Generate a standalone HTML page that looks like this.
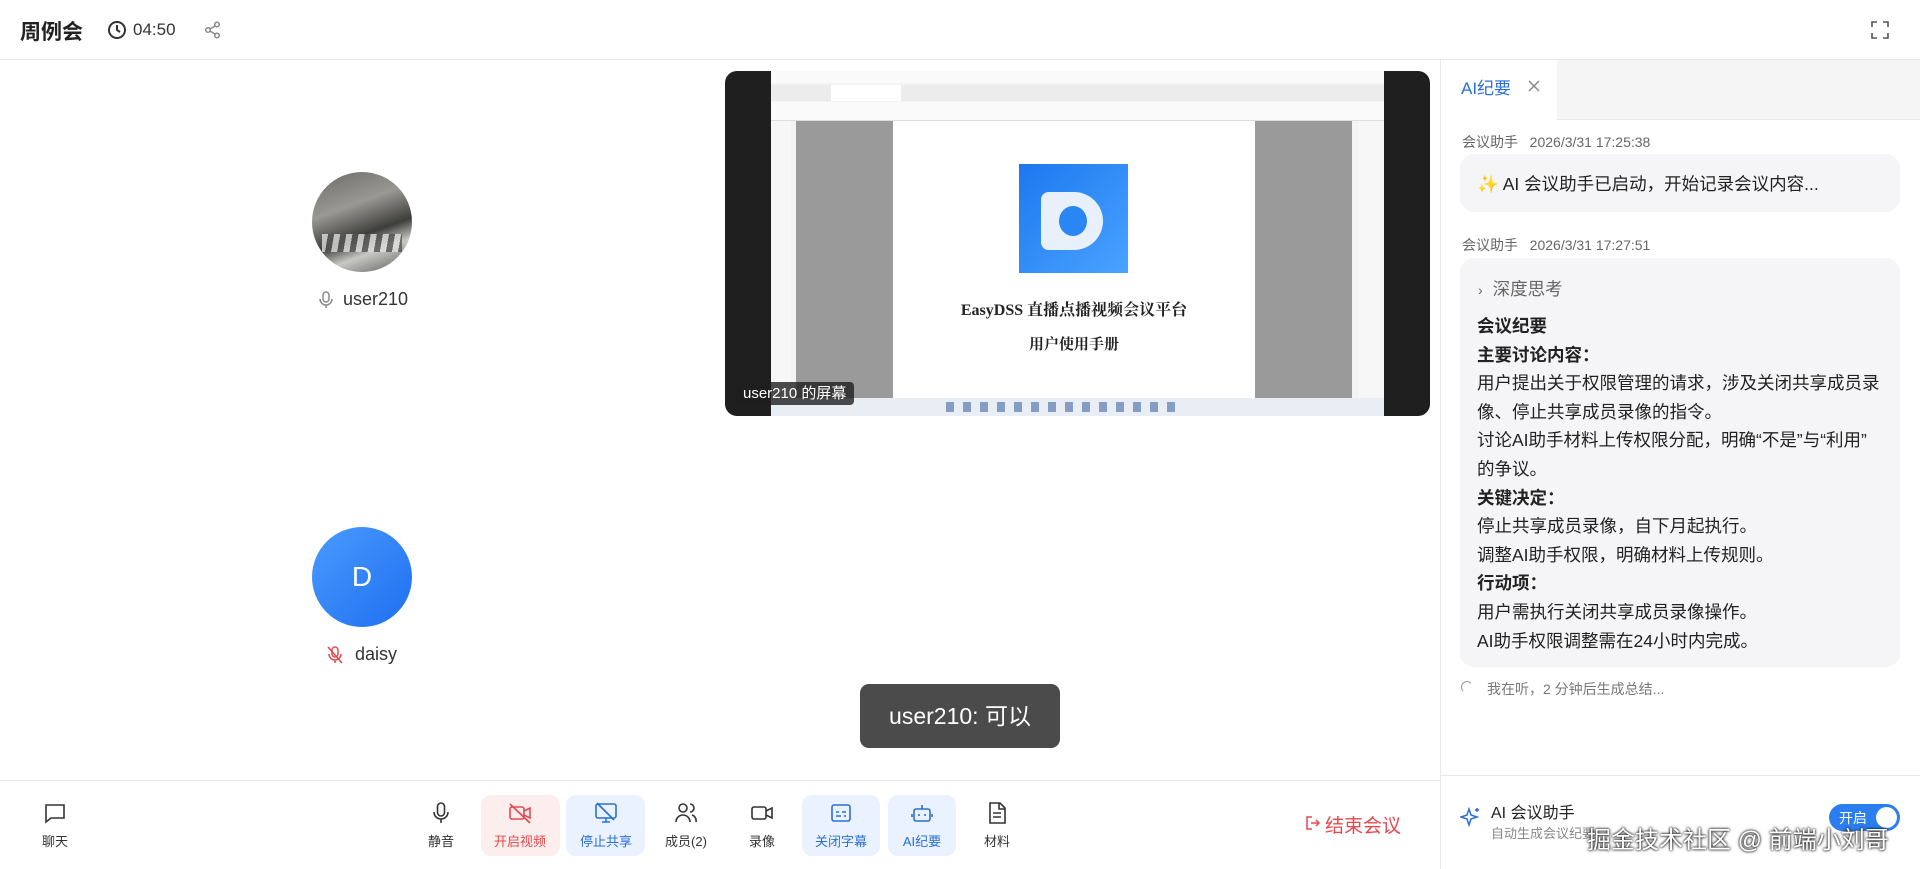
<!DOCTYPE html>
<html><head><meta charset="utf-8"><style>
*{margin:0;padding:0;box-sizing:border-box}
body{width:1920px;height:869px;overflow:hidden;background:#fff;font-family:"Liberation Sans","Noto Sans CJK SC",sans-serif;color:#222;position:relative}
.a{position:absolute}
.hdr{left:0;top:0;width:1920px;height:60px;border-bottom:1px solid #e8e8e8}
.lbl{font-size:13px;color:#333;text-align:center;width:80px}
.btnbg{border-radius:10px}
.msg{font-size:14px;color:#666}
.bub{background:#f5f5f7;border-radius:14px}
.ln{font-size:17.5px;line-height:28.6px;color:#222;white-space:nowrap}
.b{font-weight:bold}
</style></head><body>
<div class="a hdr"></div>
<div class="a" style="left:20px;top:16px;font-size:21px;font-weight:600;color:#222">周例会</div>
<svg class="a" style="left:107px;top:20px" width="20" height="20" viewBox="0 0 20 20"><circle cx="10" cy="10" r="8" fill="none" stroke="#333" stroke-width="2"/><path d="M10 5v5l3 2" fill="none" stroke="#333" stroke-width="2"/></svg>
<div class="a" style="left:133px;top:20px;font-size:17px;color:#333">04:50</div>
<svg class="a" style="left:203px;top:20px" width="20" height="20" viewBox="0 0 20 20" fill="none" stroke="#888" stroke-width="1.5"><circle cx="14" cy="4.5" r="2.3"/><circle cx="5" cy="10" r="2.3"/><circle cx="14" cy="15.5" r="2.3"/><path d="M7 9l5-3M7 11l5 3"/></svg>
<svg class="a" style="left:1870px;top:20px" width="20" height="20" viewBox="0 0 20 20" fill="none" stroke="#555" stroke-width="1.6"><path d="M2 7V2h5M13 2h5v5M18 13v5h-5M7 18H2v-5"/></svg>

<div class="a" style="left:1440px;top:60px;width:1px;height:809px;background:#e8e8e8"></div>

<div class="a" style="left:312px;top:172px;width:100px;height:100px;border-radius:50%;background:linear-gradient(160deg,#6a6a66 0%,#9a9892 35%,#3d3d3b 60%,#c8c8c4 75%,#555 100%);overflow:hidden"><div style="position:absolute;left:10px;top:62px;width:80px;height:18px;background:repeating-linear-gradient(100deg,#ddd 0 6px,#555 6px 12px);opacity:.8"></div></div>
<svg class="a" style="left:318px;top:290px" width="16" height="20" viewBox="0 0 16 20" fill="none" stroke="#888" stroke-width="1.5"><rect x="5" y="2" width="6" height="10" rx="3"/><path d="M2 9a6 6 0 0 0 12 0M8 15v3"/></svg>
<div class="a" style="left:343px;top:289px;font-size:18px;color:#333">user210</div>

<div class="a" style="left:312px;top:527px;width:100px;height:100px;border-radius:50%;background:linear-gradient(135deg,#4a9bff,#1f6ef0);color:#fff;font-size:28px;text-align:center;line-height:100px">D</div>
<svg class="a" style="left:326px;top:645px" width="18" height="20" viewBox="0 0 18 20" fill="none" stroke="#e5484d" stroke-width="1.5"><rect x="6" y="2" width="6" height="10" rx="3"/><path d="M3 9a6 6 0 0 0 12 0M9 15v3M2 2l14 16"/></svg>
<div class="a" style="left:355px;top:644px;font-size:18px;color:#333">daisy</div>

<div class="a" style="left:725px;top:71px;width:705px;height:345px;background:#1f1f1f;border-radius:12px;overflow:hidden">
 <div class="a" style="left:46px;top:0;width:613px;height:345px;background:#f3f3f3">
  <div class="a" style="left:0;top:0;width:613px;height:12px;background:#fafafa"></div>
  <div class="a" style="left:0;top:14px;width:613px;height:16px;background:#ececec"></div>
  <div class="a" style="left:60px;top:14px;width:70px;height:16px;background:#fff"></div>
  <div class="a" style="left:0;top:31px;width:613px;height:19px;background:#fafafa;border-bottom:1px solid #ddd"></div>
  <div class="a" style="left:0;top:50px;width:20px;height:277px;background:#f7f7f7"></div>
  <div class="a" style="left:25px;top:50px;width:97px;height:277px;background:#9a9a9a"></div>
  <div class="a" style="left:122px;top:50px;width:362px;height:277px;background:#fff"></div>
  <div class="a" style="left:484px;top:50px;width:97px;height:277px;background:#9a9a9a"></div>
  <div class="a" style="left:588px;top:50px;width:25px;height:277px;background:#f7f7f7"></div>
  <div class="a" style="left:248px;top:93px;width:109px;height:109px;background:linear-gradient(135deg,#1c78ef,#4aa3ff)"><div style="position:absolute;left:22px;top:28px;width:62px;height:58px;border-radius:8px 30px 30px 8px;background:#e8f0fb"></div><div style="position:absolute;left:40px;top:42px;width:28px;height:30px;border-radius:50%;background:#2a86f3"></div></div>
  <div class="a" style="left:122px;top:226px;width:362px;text-align:center;font-family:'Liberation Serif','Noto Serif CJK SC',serif;font-weight:bold;font-size:16px;color:#222">EasyDSS 直播点播视频会议平台</div>
  <div class="a" style="left:122px;top:262px;width:362px;text-align:center;font-family:'Liberation Serif','Noto Serif CJK SC',serif;font-weight:bold;font-size:15px;color:#222">用户使用手册</div>
  <div class="a" style="left:0;top:327px;width:613px;height:18px;background:#e9eef4"></div>
  <div class="a" style="left:175px;top:331px;width:230px;height:10px;background:repeating-linear-gradient(90deg,#5a7ab0 0 8px,transparent 8px 17px);opacity:.7"></div>
 </div>
 <div class="a" style="left:10px;top:311px;padding:0 8px;height:23px;line-height:23px;background:rgba(30,30,30,.8);border-radius:4px;color:#fff;font-size:15px">user210 的屏幕</div>
</div>

<div class="a" style="left:860px;top:684px;width:200px;height:64px;background:#4b4b4b;border-radius:9px;color:#fff;font-size:23px;text-align:center;line-height:64px">user210: 可以</div>

<div class="a" style="left:0;top:780px;width:1440px;height:1px;background:#e8e8e8"></div>
<div class="a btnbg" style="left:481px;top:795px;width:79px;height:61px;background:#fdeeee"></div>
<div class="a btnbg" style="left:566px;top:795px;width:79px;height:61px;background:#e9f2fe"></div>
<div class="a btnbg" style="left:802px;top:795px;width:78px;height:61px;background:#e9f2fe"></div>
<div class="a btnbg" style="left:888px;top:795px;width:68px;height:61px;background:#e9f2fe"></div>

<svg class="a" style="left:43px;top:801px" width="24" height="24" viewBox="0 0 24 24" fill="none" stroke="#333" stroke-width="1.6"><path d="M3 4h18v13H8l-5 4z"/></svg>
<div class="a lbl" style="left:15px;top:831px">聊天</div>

<svg class="a" style="left:429px;top:801px" width="24" height="24" viewBox="0 0 24 24" fill="none" stroke="#333" stroke-width="1.6"><rect x="8.5" y="2" width="7" height="13" rx="3.5"/><path d="M5 11a7 7 0 0 0 14 0M12 18v4"/></svg>
<div class="a lbl" style="left:401px;top:831px">静音</div>

<svg class="a" style="left:508px;top:801px" width="24" height="24" viewBox="0 0 24 24" fill="none" stroke="#e5484d" stroke-width="1.6"><rect x="2" y="6" width="14" height="12" rx="2"/><path d="M16 10l6-3v10l-6-3M2 3l20 19"/></svg>
<div class="a lbl" style="left:480px;top:831px;color:#e5484d">开启视频</div>

<svg class="a" style="left:594px;top:801px" width="24" height="24" viewBox="0 0 24 24" fill="none" stroke="#2b6fd6" stroke-width="1.6"><rect x="2" y="3" width="20" height="14" rx="2"/><path d="M8 21h8M12 17v4M3 2l17 17"/></svg>
<div class="a lbl" style="left:566px;top:831px;color:#2b6fd6">停止共享</div>

<svg class="a" style="left:674px;top:801px" width="24" height="24" viewBox="0 0 24 24" fill="none" stroke="#333" stroke-width="1.6"><circle cx="9" cy="7" r="4"/><path d="M2 21a7 7 0 0 1 14 0M16 3a4 4 0 0 1 0 8M18 14a6 6 0 0 1 4 7"/></svg>
<div class="a lbl" style="left:646px;top:831px">成员(2)</div>

<svg class="a" style="left:750px;top:801px" width="24" height="24" viewBox="0 0 24 24" fill="none" stroke="#333" stroke-width="1.6"><rect x="2" y="6" width="14" height="12" rx="2"/><path d="M16 10l6-3v10l-6-3"/></svg>
<div class="a lbl" style="left:722px;top:831px">录像</div>

<svg class="a" style="left:829px;top:801px" width="24" height="24" viewBox="0 0 24 24" fill="none" stroke="#2b6fd6" stroke-width="1.6"><rect x="3" y="4" width="18" height="16" rx="2"/><path d="M7 11h3M13 11h4M7 15h5M15 15h2"/></svg>
<div class="a lbl" style="left:801px;top:831px;color:#2b6fd6">关闭字幕</div>

<svg class="a" style="left:910px;top:801px" width="24" height="24" viewBox="0 0 24 24" fill="none" stroke="#2b6fd6" stroke-width="1.6"><rect x="4" y="8" width="16" height="12" rx="2"/><path d="M12 4v4M2 13v3M22 13v3M9 13v2M15 13v2"/></svg>
<div class="a lbl" style="left:882px;top:831px;color:#2b6fd6">AI纪要</div>

<svg class="a" style="left:985px;top:801px" width="24" height="24" viewBox="0 0 24 24" fill="none" stroke="#333" stroke-width="1.6"><path d="M5 2h10l5 5v15H5zM14 2v6h6M8 12h8M8 16h8"/></svg>
<div class="a lbl" style="left:957px;top:831px">材料</div>

<svg class="a" style="left:1305px;top:815px" width="16" height="16" viewBox="0 0 16 16" fill="none" stroke="#e5484d" stroke-width="1.5"><path d="M7 2H2v12h5M6 8h8M11 5l3 3-3 3"/></svg>
<div class="a" style="left:1325px;top:811px;font-size:19px;color:#e5484d">结束会议</div>

<div class="a" style="left:1441px;top:60px;width:479px;height:60px;background:#f5f5f5;border-bottom:1px solid #e8e8e8"></div>
<div class="a" style="left:1441px;top:60px;width:116px;height:60px;background:#fff"></div>
<div class="a" style="left:1461px;top:74px;font-size:17px;color:#2b6fd6">AI纪要</div>
<svg class="a" style="left:1527px;top:79px" width="14" height="14" viewBox="0 0 14 14" stroke="#888" stroke-width="1.5"><path d="M2 2l10 10M12 2L2 12"/></svg>

<div class="a msg" style="left:1462px;top:132px">会议助手&nbsp;&nbsp;&nbsp;2026/3/31 17:25:38</div>
<div class="a bub" style="left:1460px;top:154px;width:440px;height:58px"></div>
<div class="a" style="left:1477px;top:171px;font-size:17.5px;color:#222"><span style="color:#f0a030">✨</span> AI 会议助手已启动，开始记录会议内容...</div>

<div class="a msg" style="left:1462px;top:235px">会议助手&nbsp;&nbsp;&nbsp;2026/3/31 17:27:51</div>
<div class="a bub" style="left:1460px;top:258px;width:440px;height:409px"></div>
<div class="a" style="left:1478px;top:276px;font-size:17.5px;color:#666"><span style="font-size:14px;margin-right:10px">›</span>深度思考</div>
<div class="a" style="left:1477px;top:312px">
<div class="ln b">会议纪要</div>
<div class="ln b">主要讨论内容：</div>
<div class="ln">用户提出关于权限管理的请求，涉及关闭共享成员录</div>
<div class="ln">像、停止共享成员录像的指令。</div>
<div class="ln">讨论AI助手材料上传权限分配，明确“不是”与“利用”</div>
<div class="ln">的争议。</div>
<div class="ln b">关键决定：</div>
<div class="ln">停止共享成员录像，自下月起执行。</div>
<div class="ln">调整AI助手权限，明确材料上传规则。</div>
<div class="ln b">行动项：</div>
<div class="ln">用户需执行关闭共享成员录像操作。</div>
<div class="ln">AI助手权限调整需在24小时内完成。</div>
</div>
<div class="a" style="left:1461px;top:681px;width:12px;height:12px;border-radius:50%;border-top:1.5px solid #999;border-left:1.5px solid #999;border-right:1.5px solid transparent;border-bottom:1.5px solid transparent"></div>
<div class="a" style="left:1487px;top:679px;font-size:14px;color:#777">我在听，2 分钟后生成总结...</div>

<div class="a" style="left:1441px;top:775px;width:479px;height:1px;background:#e8e8e8"></div>
<svg class="a" style="left:1460px;top:806px" width="22" height="22" viewBox="0 0 22 22" fill="none" stroke="#2b6fd6" stroke-width="1.5"><path d="M9 3l2 6 6 2-6 2-2 6-2-6-6-2 6-2z"/><path d="M17 2v4M15 4h4"/></svg>
<div class="a" style="left:1491px;top:799px;font-size:16px;color:#222">AI 会议助手</div>
<div class="a" style="left:1491px;top:823px;font-size:13px;color:#888">自动生成会议纪要</div>
<div class="a" style="left:1829px;top:804px;width:71px;height:27px;border-radius:14px;background:#2b7df0"><div style="position:absolute;left:10px;top:4px;color:#fff;font-size:14px">开启</div><div style="position:absolute;right:3px;top:3px;width:21px;height:21px;border-radius:50%;background:#fff"></div></div>
<div class="a" style="left:1587px;top:820px;font-size:24px;color:#fff;text-shadow:0 0 2px #000,0 0 3px #333;white-space:nowrap">掘金技术社区 @ 前端小刘哥</div>
</body></html>
